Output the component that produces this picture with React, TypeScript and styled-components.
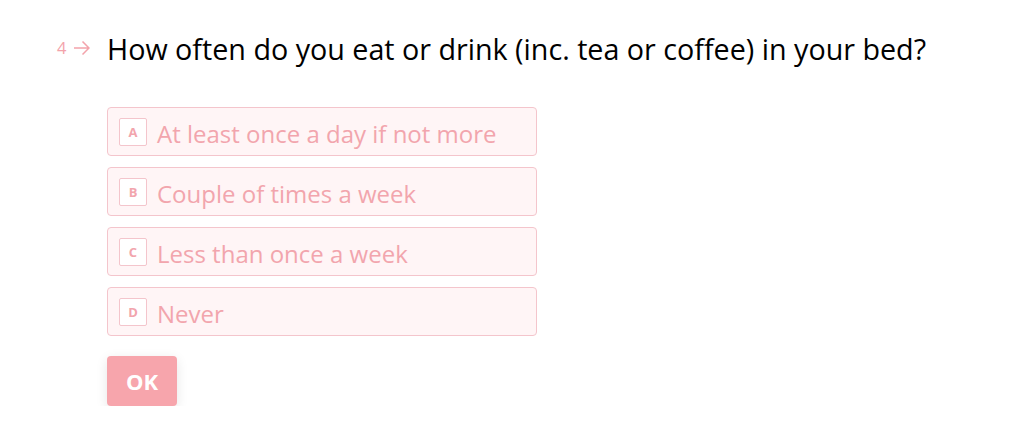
import React from "react";
import styled, { createGlobalStyle } from "styled-components";

const GlobalStyle = createGlobalStyle`
  html, body {
    margin: 0;
    padding: 0;
    background: #ffffff;
    font-family: "Open Sans", "Noto Sans", sans-serif;
  }
`;

const Page = styled.div`
  padding: 30px 0 0 56px;
`;

const QuestionRow = styled.div`
  display: flex;
  align-items: flex-start;
`;

const Counter = styled.div`
  display: flex;
  align-items: center;
  gap: 7px;
  width: 51px;
  padding: 8px 0 0 1px;
  box-sizing: border-box;
  color: #f3a3ab;
  font-size: 16.5px;
  line-height: 20px;
`;

const Title = styled.h1`
  margin: 0;
  font-size: 28.7px;
  font-weight: 400;
  line-height: 38px;
  color: #000000;
`;

const Options = styled.div`
  display: flex;
  flex-direction: column;
  gap: 11px;
  margin: 39px 0 0 51px;
  width: 430px;
`;

const Option = styled.div`
  display: flex;
  align-items: center;
  gap: 10px;
  height: 49px;
  box-sizing: border-box;
  padding: 1px 11px 0;
  border: 1px solid #f4c5cc;
  border-radius: 4px;
  background: #fff5f6;
  color: #f2a5ad;
  font-size: 24px;
`;

const Label = styled.span`
  padding-top: 3px;
`;

const Key = styled.span`
  display: flex;
  align-items: center;
  justify-content: center;
  width: 28px;
  height: 28px;
  box-sizing: border-box;
  border: 1px solid #f4c5cc;
  border-radius: 2px;
  background: #ffffff;
  font-size: 13px;
  font-weight: 700;
`;

const OkButton = styled.button`
  margin: 20px 0 0 51px;
  width: 70px;
  height: 50px;
  border: none;
  border-radius: 4px;
  background: #f7a5ac;
  color: #ffffff;
  font-family: inherit;
  font-size: 22px;
  font-weight: 700;
  box-shadow: 0 3px 12px rgba(0, 0, 0, 0.1);
`;

const Arrow = () => (
  <svg width="17" height="14" viewBox="0 0 17 14" fill="none" stroke="#f3a3ab" strokeWidth="1.5">
    <path d="M1 7h15M9.5 0.5l6.5 6.5-6.5 6.5" />
  </svg>
);

const answers = [
  { key: "A", text: "At least once a day if not more" },
  { key: "B", text: "Couple of times a week" },
  { key: "C", text: "Less than once a week" },
  { key: "D", text: "Never" },
];

export default function App() {
  return (
    <>
      <GlobalStyle />
      <Page>
        <QuestionRow>
          <Counter>
            4<Arrow />
          </Counter>
          <Title>How often do you eat or drink (inc. tea or coffee) in your bed?</Title>
        </QuestionRow>
        <Options>
          {answers.map((a) => (
            <Option key={a.key}>
              <Key>{a.key}</Key>
              <Label>{a.text}</Label>
            </Option>
          ))}
        </Options>
        <OkButton>OK</OkButton>
      </Page>
    </>
  );
}
